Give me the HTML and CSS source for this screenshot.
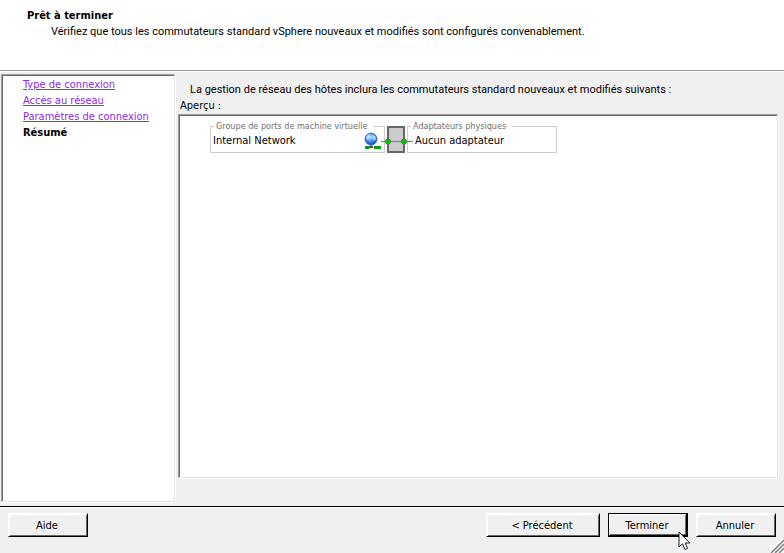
FILE: index.html
```html
<!DOCTYPE html>
<html lang="fr">
<head>
  <meta charset="UTF-8">
  <title>Prêt à terminer</title>
  <link rel="stylesheet" href="styles.css">
</head>
<body>
  <header class="header">
    <h1>Prêt à terminer</h1>
    <p>Vérifiez que tous les commutateurs standard vSphere nouveaux et modifiés sont configurés convenablement.</p>
  </header>

  <div class="content">
    <nav class="steps">
      <a href="#type">Type de connexion</a>
      <a href="#acces">Accès au réseau</a>
      <a href="#parametres">Paramètres de connexion</a>
      <strong>Résumé</strong>
    </nav>

    <main class="summary">
      <p class="intro">La gestion de réseau des hôtes inclura les commutateurs standard nouveaux et modifiés suivants :</p>
      <h2>Aperçu :</h2>
      <div class="preview">
        <div class="diagram">
          <fieldset class="group portGroup">
            <legend>Groupe de ports de machine virtuelle</legend>
            <span>Internal Network</span>
            <svg class="globe" width="18" height="18" viewBox="0 0 18 18">
              <defs>
                <radialGradient id="ball" cx="45%" cy="35%" r="65%">
                  <stop offset="0" stop-color="#b9dcff"/>
                  <stop offset="0.5" stop-color="#4d94ee"/>
                  <stop offset="1" stop-color="#1447b4"/>
                </radialGradient>
              </defs>
              <circle cx="7" cy="7" r="6" fill="url(#ball)" stroke="#2a5fc4" stroke-width="0.8"/>
              <path d="M2.5 4 L5.5 2.3 L6.5 4.5 L5 6.5 L3.5 8 L2 6.5Z M8.5 2.5 L11.5 4.5 L12 7.5 L10 8.5 L8.5 6Z" fill="#d9edff" opacity="0.7"/>
              <path d="M6 13 H8 V15 H6Z" fill="#777"/>
              <path d="M1 14 H17 V17 H1Z" fill="#0a9a12"/>
              <path d="M5 14 H10 V17 H5Z" fill="#fff"/>
              <path d="M5 14 H9 V16 H5Z" fill="#555"/>
            </svg>
          </fieldset>
          <svg class="switch" width="32" height="28" viewBox="0 0 32 28">
            <rect x="7" y="2" width="16" height="25" fill="#ccc" stroke="#666" stroke-width="2"/>
            <path d="M0 16.5 H32" stroke="#8c8c8c" stroke-width="1.4"/>
            <circle cx="7" cy="16.5" r="2.7" fill="#0cbf0c" stroke="#3c7a3c" stroke-width="0.6"/>
            <circle cx="23" cy="16.5" r="2.7" fill="#0cbf0c" stroke="#3c7a3c" stroke-width="0.6"/>
          </svg>
          <fieldset class="group adapters">
            <legend>Adaptateurs physiques</legend>
            <span>Aucun adaptateur</span>
          </fieldset>
        </div>
      </div>
    </main>
  </div>

  <footer class="footer">
    <button type="button" class="help">Aide</button>
    <button type="button" class="previous">&lt; Précédent</button>
    <div class="finish">
      <button type="button" class="default">Terminer</button>
      <svg class="cursor" width="13" height="20" viewBox="0 0 13 20">
        <path d="M1 1 V16 L4.5 12.8 L7 18.6 L9.6 17.4 L7.2 12 H11.8 Z" fill="#fff" stroke="#1c1c30" stroke-width="1"/>
      </svg>
    </div>
    <button type="button">Annuler</button>
    <svg class="grip" width="14" height="14" viewBox="0 0 14 14">
      <path d="M0 13 L13 0 M4 14 L14 4 M8 14 L14 8" stroke="#fff" stroke-width="2"/>
      <path d="M1 14 L14 1 M5 14 L14 5 M9 14 L14 9" stroke="#888" stroke-width="1.6"/>
    </svg>
  </footer>
</body>
</html>
```

FILE: styles.css
```css
* {
  box-sizing: border-box;
}

body {
  margin: 0;
  min-height: 100vh;
  display: flex;
  flex-direction: column;
  background: #f0f0f0;
  color: #000;
  font: 11px/16px Tahoma, "DejaVu Sans Condensed", sans-serif;
}

h1, h2, p {
  margin: 0;
  font-size: 11px;
}

p {
  font-family: Tahoma, Roboto, sans-serif;
}

h2 {
  font-weight: normal;
}

.header {
  background: #fff;
  padding: 8px 27px 30px;
  border-bottom: 1px solid #a0a0a0;
  box-shadow: 0 1px #fff;
}

.header p {
  padding-left: 24px;
}

.content {
  flex: 1;
  display: flex;
  gap: 3px;
  padding: 3px 6px 4px 1px;
}

.steps,
.preview {
  background: #fff;
  border: 1px solid;
  border-color: #a0a0a0 #e3e3e3 #e3e3e3 #a0a0a0;
  box-shadow: inset 1px 1px #696969, 1px 1px #fff;
}

.steps {
  flex: none;
  width: 174px;
  display: flex;
  flex-direction: column;
  align-items: flex-start;
  padding: 2px 21px;
}

.steps a {
  color: #8a2be2;
}

.summary {
  flex: 1;
  display: flex;
  flex-direction: column;
  padding: 8px 0 24px;
}

.intro {
  padding-left: 12px;
}

.summary h2 {
  padding-left: 2px;
}

.preview {
  flex: 1;
  padding: 5px 31px;
}

.diagram {
  display: flex;
  align-items: flex-end;
}

.group {
  display: flex;
  justify-content: space-between;
  height: 33px;
  margin: 0;
  padding: 0 2px;
  border: 1px solid #ccc;
}

.group span {
  padding-top: 1px;
}

.group legend {
  margin-left: 1px;
  padding: 0 6px 0 2px;
  font-size: 9px;
  line-height: 12px;
  color: #707070;
}

.portGroup {
  width: 175px;
}

.adapters {
  width: 150px;
  padding-left: 7px;
}

.adapters legend {
  margin-left: -4px;
}

.switch {
  flex: none;
  margin: 0 -6px 0 -4px;
  z-index: 1;
}

.footer {
  position: relative;
  display: flex;
  gap: 8px;
  padding: 6px 8px 16px;
  border-top: 1px solid #000;
  box-shadow: inset 0 1px #fff;
}

button {
  width: 80px;
  height: 24px;
  padding: 1px 2px 0 0;
  font: inherit;
  color: #000;
  background: #f0f0f0;
  border: 1px solid;
  border-color: #fff #000 #000 #fff;
  box-shadow: inset 1px 1px #fff, inset -1px -1px #696969;
}

.help {
  margin-right: auto;
}

.previous {
  width: 114px;
}

.default {
  border-color: #000;
  box-shadow: inset -1px -1px #000, inset 1px 1px #fff, inset -2px -2px #696969;
}

.finish {
  position: relative;
}

/* mouse pointer over the default button */
.cursor {
  position: absolute;
  left: 70px;
  top: 18px;
}

.grip {
  position: absolute;
  right: 0;
  bottom: 0;
}
```
